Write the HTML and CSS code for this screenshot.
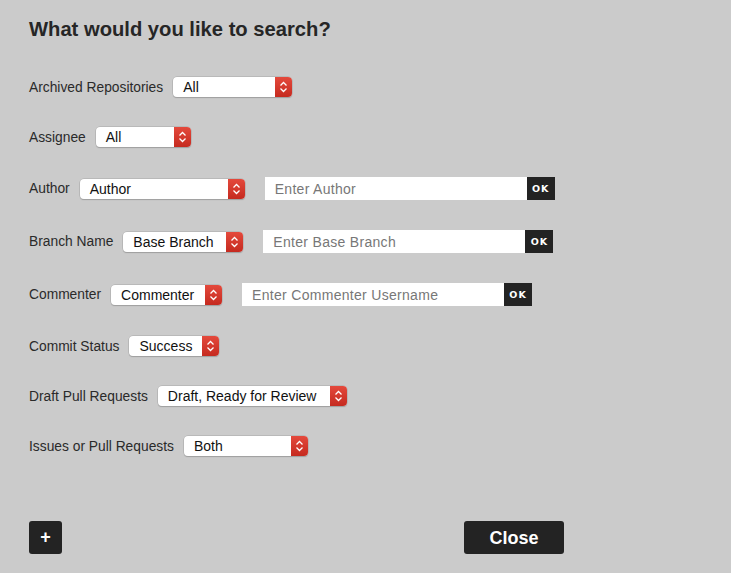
FILE: index.html
```html
<!DOCTYPE html>
<html>
<head>
<meta charset="utf-8">
<link rel="stylesheet" href="styles.css">
</head>
<body>
<div class="page">
  <h1 class="title">What would you like to search?</h1>
  <div class="rows">
    <div class="row">
      <span class="label">Archived Repositories</span>
      <div class="select w119"><span class="val">All</span><span class="arrow"><svg width="9" height="12" viewBox="0 0 9 12"><path d="M1.5 4.5 L4.5 1.5 L7.5 4.5 M1.5 7.5 L4.5 10.5 L7.5 7.5" fill="none" stroke="#fff" stroke-width="1.3"/></svg></span></div>
    </div>
    <div class="row">
      <span class="label">Assignee</span>
      <div class="select w95"><span class="val">All</span><span class="arrow"><svg width="9" height="12" viewBox="0 0 9 12"><path d="M1.5 4.5 L4.5 1.5 L7.5 4.5 M1.5 7.5 L4.5 10.5 L7.5 7.5" fill="none" stroke="#fff" stroke-width="1.3"/></svg></span></div>
    </div>
    <div class="row tall">
      <span class="label">Author</span>
      <div class="select w165"><span class="val">Author</span><span class="arrow"><svg width="9" height="12" viewBox="0 0 9 12"><path d="M1.5 4.5 L4.5 1.5 L7.5 4.5 M1.5 7.5 L4.5 10.5 L7.5 7.5" fill="none" stroke="#fff" stroke-width="1.3"/></svg></span></div>
      <div class="field"><span class="ph">Enter Author</span><span class="ok">OK</span></div>
    </div>
    <div class="row tall">
      <span class="label">Branch Name</span>
      <div class="select w120"><span class="val">Base Branch</span><span class="arrow"><svg width="9" height="12" viewBox="0 0 9 12"><path d="M1.5 4.5 L4.5 1.5 L7.5 4.5 M1.5 7.5 L4.5 10.5 L7.5 7.5" fill="none" stroke="#fff" stroke-width="1.3"/></svg></span></div>
      <div class="field"><span class="ph">Enter Base Branch</span><span class="ok">OK</span></div>
    </div>
    <div class="row tall">
      <span class="label">Commenter</span>
      <div class="select w111"><span class="val">Commenter</span><span class="arrow"><svg width="9" height="12" viewBox="0 0 9 12"><path d="M1.5 4.5 L4.5 1.5 L7.5 4.5 M1.5 7.5 L4.5 10.5 L7.5 7.5" fill="none" stroke="#fff" stroke-width="1.3"/></svg></span></div>
      <div class="field"><span class="ph">Enter Commenter Username</span><span class="ok">OK</span></div>
    </div>
    <div class="row">
      <span class="label">Commit Status</span>
      <div class="select w90"><span class="val">Success</span><span class="arrow"><svg width="9" height="12" viewBox="0 0 9 12"><path d="M1.5 4.5 L4.5 1.5 L7.5 4.5 M1.5 7.5 L4.5 10.5 L7.5 7.5" fill="none" stroke="#fff" stroke-width="1.3"/></svg></span></div>
    </div>
    <div class="row">
      <span class="label">Draft Pull Requests</span>
      <div class="select w189"><span class="val">Draft, Ready for Review</span><span class="arrow"><svg width="9" height="12" viewBox="0 0 9 12"><path d="M1.5 4.5 L4.5 1.5 L7.5 4.5 M1.5 7.5 L4.5 10.5 L7.5 7.5" fill="none" stroke="#fff" stroke-width="1.3"/></svg></span></div>
    </div>
    <div class="row">
      <span class="label">Issues or Pull Requests</span>
      <div class="select w124"><span class="val">Both</span><span class="arrow"><svg width="9" height="12" viewBox="0 0 9 12"><path d="M1.5 4.5 L4.5 1.5 L7.5 4.5 M1.5 7.5 L4.5 10.5 L7.5 7.5" fill="none" stroke="#fff" stroke-width="1.3"/></svg></span></div>
    </div>
  </div>
  <div class="footer">
    <button class="plus">+</button>
    <button class="close">Close</button>
  </div>
</div>
</body>
</html>
```
FILE: styles.css
```css
html, body {
  margin: 0;
  padding: 0;
  background: #cbcbcb;
}
body {
  font-family: "Liberation Sans", Arial, sans-serif;
  color: #262626;
  width: 731px;
  height: 573px;
  overflow: hidden;
}
.page {
  padding: 16px 29px 0 29px;
  display: flex;
  flex-direction: column;
  height: 573px;
  box-sizing: border-box;
}
.title {
  margin: 0;
  font-size: 20.2px;
  font-weight: bold;
  line-height: 26px;
  color: #262626;
}
.rows {
  margin-top: 35px;
  display: flex;
  flex-direction: column;
  gap: 30px;
}
.row {
  display: flex;
  align-items: center;
  height: 20px;
}
.row.tall {
  height: 23px;
}
.label {
  font-size: 13.8px;
  color: #2a2a2a;
  margin-right: 10px;
  white-space: nowrap;
}
.select {
  height: 20px;
  box-sizing: border-box;
  background: #fff;
  border-radius: 4px;
  box-shadow: 0 0 0 0.5px #a8a8a8, 0 1px 1px rgba(0,0,0,0.25);
  display: flex;
  align-items: stretch;
  overflow: hidden;
  flex-shrink: 0;
}
.w119 { width: 119px; }
.w95 { width: 95px; }
.w165 { width: 165px; }
.w120 { width: 120px; }
.w111 { width: 111px; }
.w90 { width: 90px; }
.w189 { width: 189px; }
.w124 { width: 124px; }
.val {
  flex: 1;
  padding-left: 10px;
  font-size: 14px;
  line-height: 20px;
  color: #111;
  white-space: nowrap;
  overflow: hidden;
}
.arrow {
  width: 17px;
  flex-shrink: 0;
  background: linear-gradient(#e4493c, #c52a1f);
  display: flex;
  align-items: center;
  justify-content: center;
}
.field {
  margin-left: 20px;
  display: flex;
  height: 23px;
  width: 290px;
  flex-shrink: 0;
}
.ph {
  flex: 1;
  background: #fff;
  font-size: 14px;
  letter-spacing: 0.3px;
  line-height: 24px;
  color: #777;
  padding-left: 10px;
  white-space: nowrap;
}
.ok {
  width: 28px;
  background: #232323;
  color: #fff;
  font-size: 9.5px;
  font-weight: bold;
  letter-spacing: 1px;
  text-align: center;
  line-height: 23px;
  font-family: "DejaVu Sans", sans-serif;
}
.footer {
  margin-top: auto;
  margin-bottom: 19px;
  display: flex;
  align-items: center;
}
.plus {
  width: 33px;
  height: 33px;
  border: none;
  border-radius: 3px;
  background: #232323;
  color: #fff;
  font-size: 18px;
  font-weight: bold;
  padding: 0;
  font-family: "Liberation Sans", Arial, sans-serif;
}
.close {
  margin-left: 402px;
  width: 100px;
  height: 33px;
  border: none;
  border-radius: 3px;
  background: #232323;
  color: #fff;
  font-size: 18px;
  font-weight: bold;
  padding: 2px 0 0 0;
  font-family: "Liberation Sans", Arial, sans-serif;
}
```
